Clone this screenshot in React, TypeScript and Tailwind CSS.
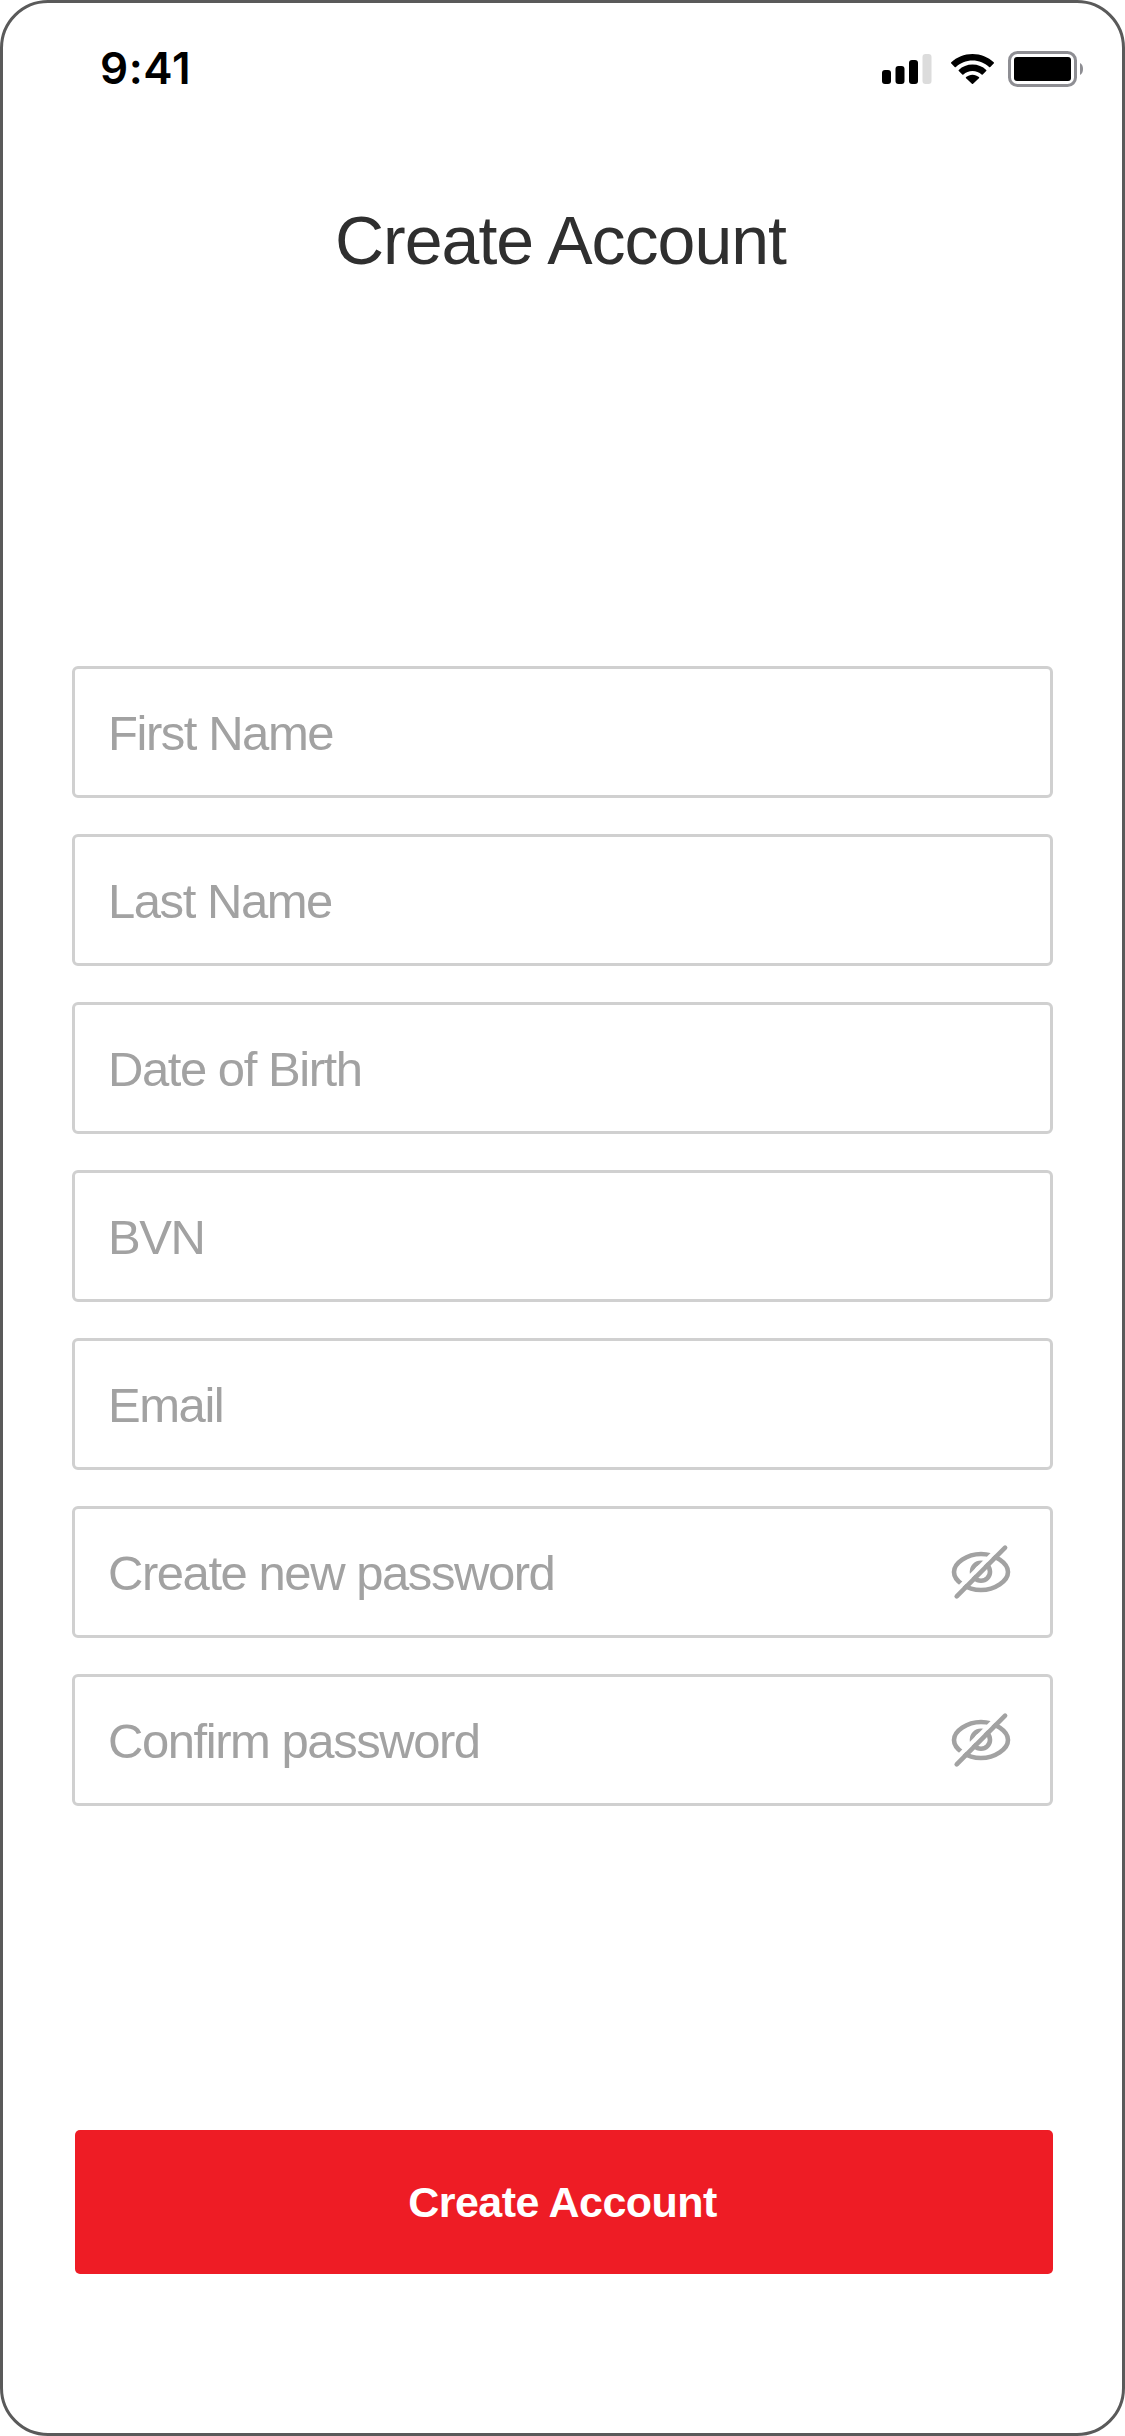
const fields: { label: string; secret?: boolean }[] = [
  { label: "First Name" },
  { label: "Last Name" },
  { label: "Date of Birth" },
  { label: "BVN" },
  { label: "Email" },
  { label: "Create new password", secret: true },
  { label: "Confirm password", secret: true },
];

function SignalIcon() {
  return (
    <svg className="h-[30px] w-[50px]" viewBox="0 0 50 30">
      <rect x="0" y="16" width="9" height="14" rx="3" />
      <rect x="13.5" y="12" width="9" height="18" rx="3" />
      <rect x="27" y="6" width="9" height="24" rx="3" />
      <rect x="40.5" y="0" width="9" height="30" rx="3" fill="#dcdcdc" />
    </svg>
  );
}

function WifiIcon() {
  return (
    <svg className="h-[30px] w-[43px]" viewBox="0 0 43 30">
      <path d="M21.5 0C29.8 0 37.2 3.2 42.7 8.3Q43.3 8.9 42.7 9.5L39.3 12.9Q38.7 13.4 38.1 12.9C33.7 8.9 27.9 6.4 21.5 6.4S9.3 8.9 4.9 12.9Q4.3 13.4 3.7 12.9L.3 9.5Q-.3 8.9 .3 8.3C5.8 3.2 13.2 0 21.5 0Z" />
      <path d="M21.5 10.5C26.8 10.5 31.6 12.5 35.2 15.9Q35.8 16.5 35.2 17.1L31.7 20.4Q31.2 20.9 30.6 20.4C28.2 18.2 25 16.9 21.5 16.9S14.8 18.2 12.4 20.4Q11.8 20.9 11.3 20.4L7.8 17.1Q7.2 16.5 7.8 15.9C11.4 12.5 16.2 10.5 21.5 10.5Z" />
      <path d="M21.5 20.7C24 20.7 26.2 21.6 27.9 23.1Q28.5 23.7 27.9 24.3L22.1 29.8Q21.5 30.3 20.9 29.8L15.1 24.3Q14.5 23.7 15.1 23.1C16.8 21.6 19 20.7 21.5 20.7Z" />
    </svg>
  );
}

function BatteryIcon() {
  return (
    <svg className="h-9 w-[75px]" viewBox="0 0 75 36">
      <rect x="1.5" y="1.5" width="66" height="33" rx="8" fill="none" stroke="#8e8e93" strokeWidth="3" />
      <rect x="6" y="6" width="57" height="24" rx="3" />
      <path d="M72 12C74 13 75 15.3 75 18S74 23 72 24Z" fill="#8e8e93" />
    </svg>
  );
}

function EyeOffIcon() {
  return (
    <svg className="h-[60px] w-[66px]" viewBox="0 0 66 60" fill="none" stroke="#a2a2a2" strokeWidth="4.6">
      <path d="M6 30C6 21 19 12 33 12S60 21 60 30S47 48 33 48S6 39 6 30Z" />
      <circle cx="33" cy="29.7" r="9" />
      <path d="M53.6 2.9L6 50.8" stroke="#fff" strokeWidth="4.2" />
      <path d="M57.1 5.7L8.7 54.3" strokeLinecap="round" />
    </svg>
  );
}

export default function App() {
  return (
    <div className="bg-white">
      <main className="flex h-[2436px] w-[1125px] flex-col rounded-[48px] border-[3px] border-[#5a5a5a] bg-white font-['Liberation_Sans',Arial,sans-serif]">
        <header className="flex h-[132px] items-center justify-between pr-[39px] pl-[97px]">
          <time className="pb-[2px] font-['Inter',sans-serif] text-[44px] leading-none font-semibold tracking-[0.6px] text-black">
            9:41
          </time>
          <div className="flex items-center gap-[14px]">
            <SignalIcon />
            <div className="flex pl-[5px]">
              <WifiIcon />
            </div>
            <BatteryIcon />
          </div>
        </header>
        <h1 className="mt-[65px] pr-[4px] text-center text-[68px] leading-[80px] tracking-[-1px] text-[#2f2f2f]">
          Create Account
        </h1>
        <form className="mt-[386px] flex flex-col gap-9 px-[69px]">
          {fields.map((field) => (
            <label
              key={field.label}
              className="flex h-[132px] items-center justify-between rounded-md border-[3px] border-[#d0d0d0] pr-9 pl-[33px]"
            >
              <span className="pt-[2px] text-[49px] leading-[56px] tracking-[-1.45px] text-[#a2a2a2]">{field.label}</span>
              {field.secret && <EyeOffIcon />}
            </label>
          ))}
        </form>
        <button className="mt-[324px] mr-[69px] ml-[72px] h-36 rounded-[5px] bg-[#ee1c25] pr-[3px] text-[43px] leading-[56px] font-bold tracking-[-0.55px] text-white">
          Create Account
        </button>
      </main>
    </div>
  );
}
